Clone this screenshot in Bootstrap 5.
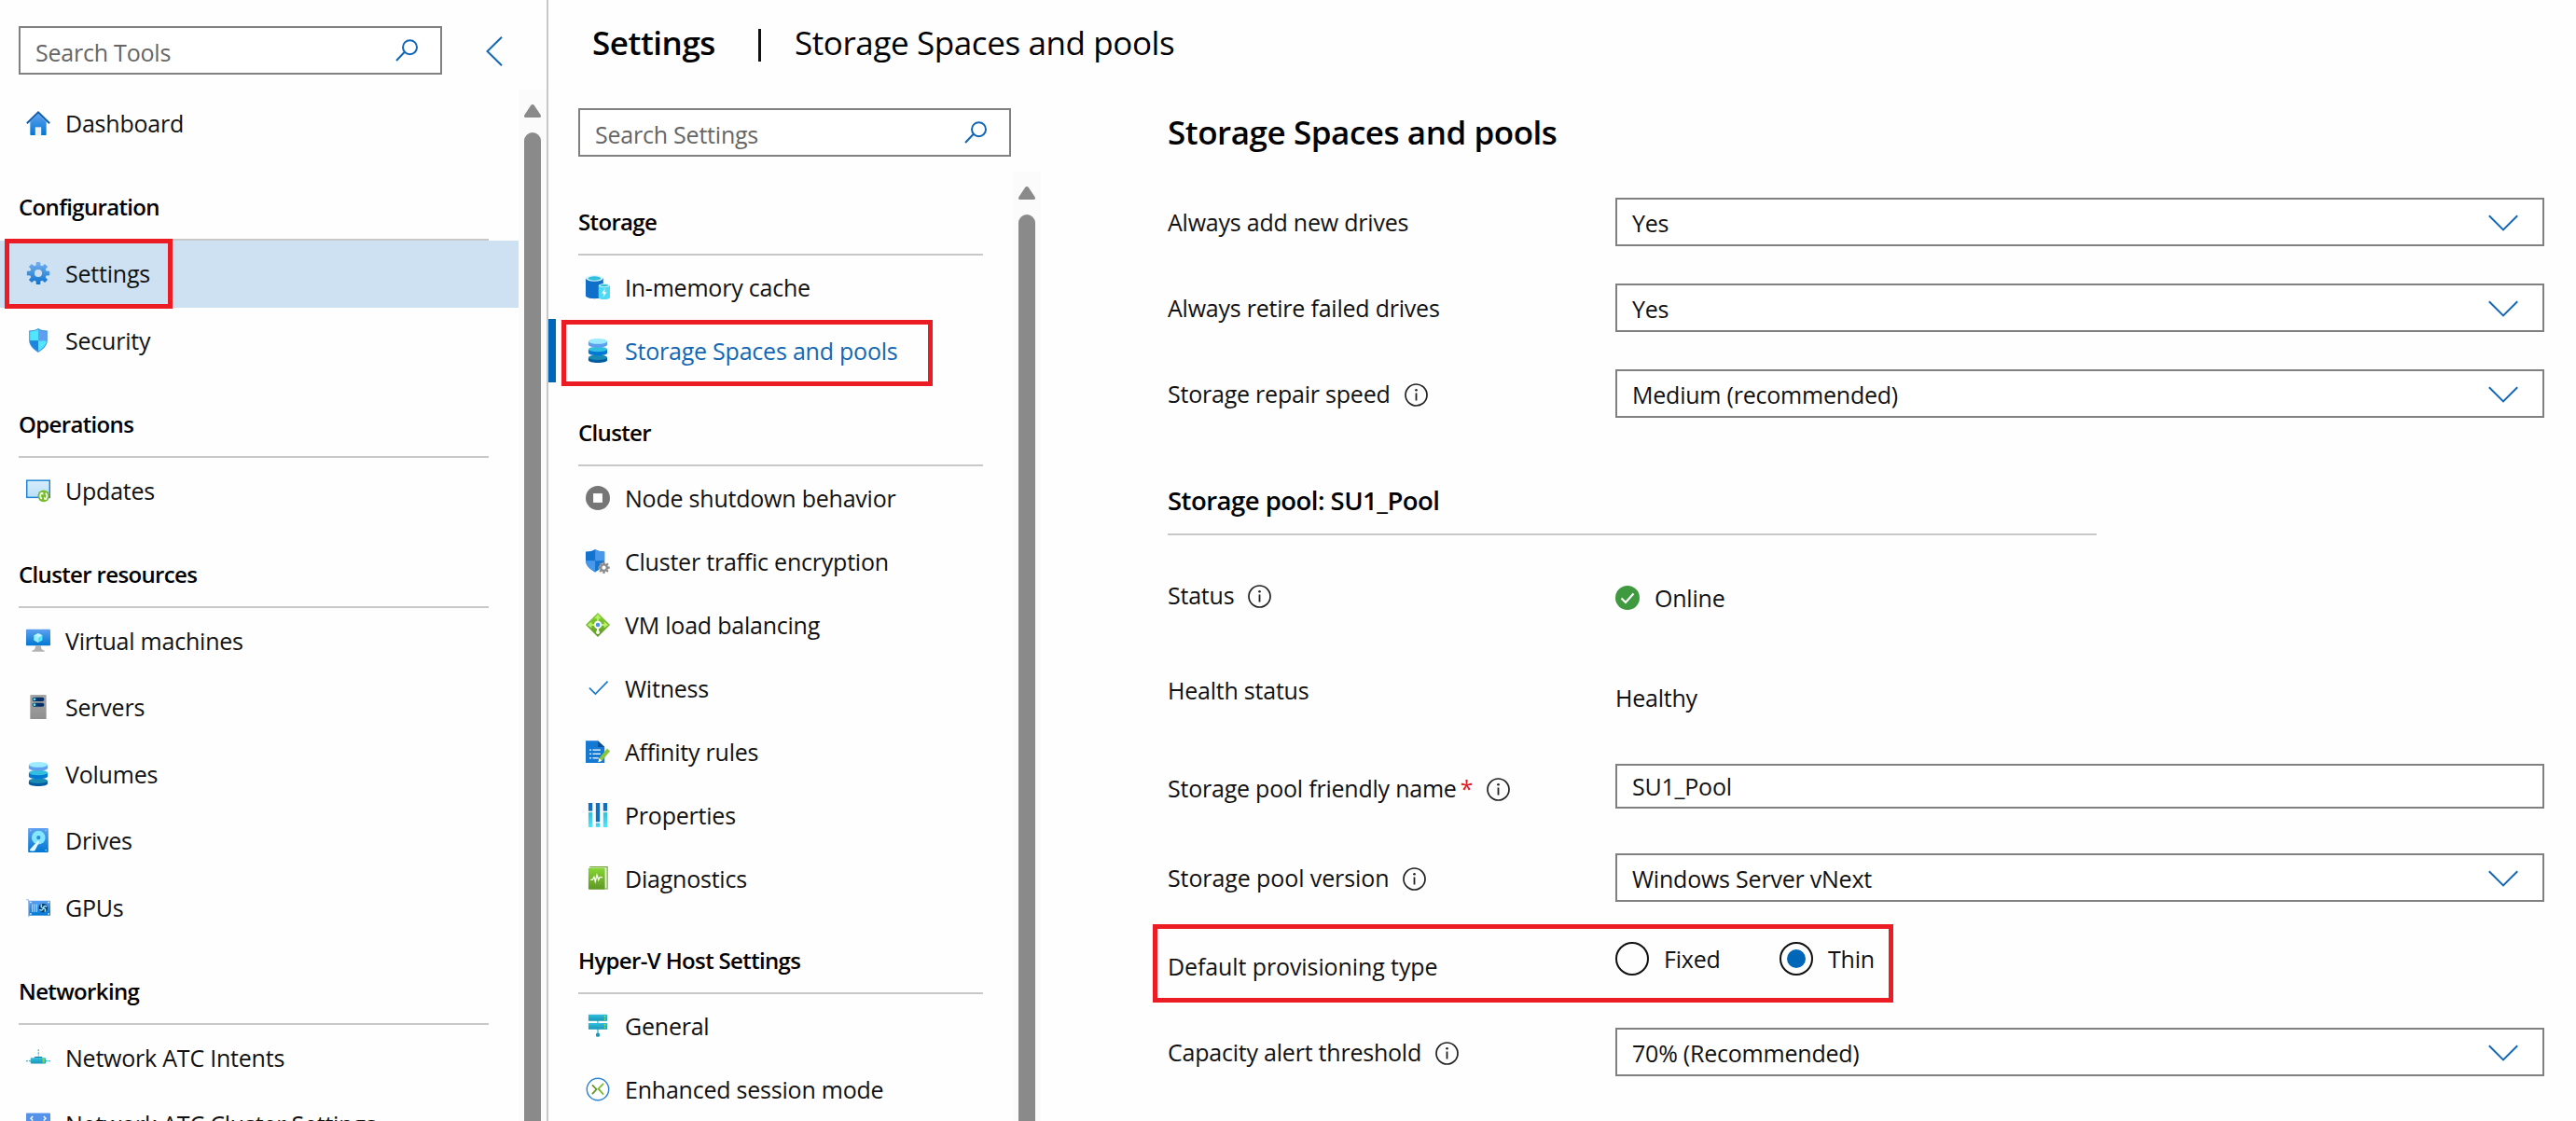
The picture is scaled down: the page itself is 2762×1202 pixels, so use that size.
<!DOCTYPE html>
<html lang="en">
<head>
<meta charset="utf-8">
<title>Settings | Storage Spaces and pools</title>
<link href="https://cdn.jsdelivr.net/npm/bootstrap@5.3.0/dist/css/bootstrap.min.css" rel="stylesheet">
<style>
  body { font-family: "Open Sans", "Noto Sans", sans-serif; font-size: 25px; letter-spacing: -.22px; line-height: 36px; color: #111; background: #fefefe; }
  svg { display: block; flex: none; }
  .ico { width: 26px; height: 26px; }
  .blue-line { fill: none; stroke: #1267b4; stroke-width: 2; }

  /* search boxes and form fields */
  .field { height: 52px; border: 2px solid #808080; border-radius: 0; background: #fff; }
  .field .form-control { font-size: 25px; letter-spacing: -.22px; line-height: 36px; padding: 4px 0 0; color: #111; border: 0; border-radius: 0; background: none; box-shadow: none; }
  .field .form-control::placeholder { color: #666; opacity: 1; }
  .field-short { height: 48px; }
  .field-short .form-control { padding-top: 0; }
  .pick { padding: 2px 26px 0 16px; }

  /* tool navigation */
  .tools { width: 588px; border-right: 2px solid #c8c8c8; }
  .tools-top { height: 96px; padding: 28px 0 0 20px; gap: 47px; }
  .tools-top .field { width: 454px; padding: 0 24px 0 16px; }
  .tools-list { width: 556px; }
  .tool-item { height: 71.5px; padding: 0 0 1px 28px; gap: 16px; color: #111; }
  .tool-item.active { background: #cde1f2; }
  .nav-head { height: 90px; padding-bottom: 16px; margin: 0 32px 0 20px; border-bottom: 2px solid #c8c8c8; font-size: 24px; font-weight: 600; letter-spacing: -.65px; color: #000; }
  .tools-list .nav-head { height: 89.5px; }
  .track { width: 30px; padding-top: 16px; background: #fbfbfb; }
  .thumb { width: 18px; margin-top: 16px; border-radius: 9px 9px 0 0; background: #8a8a8a; }

  /* settings navigation */
  .crumbs { height: 116px; padding: 28px 0 0 47px; font-size: 35px; letter-spacing: -.4px; color: #000; }
  .crumbs strong, .page-title { font-weight: 600; letter-spacing: -.45px; }
  .crumb-bar { width: 3px; height: 35px; margin: 3px 36px 0 46px; background: #111; }
  .settings-col { width: 528px; }
  .settings-top { height: 68px; padding-left: 32px; }
  .settings-top .field { width: 464px; padding: 0 24px 0 16px; }
  .settings-list { width: 498px; }
  .settings-list .nav-head { margin: 0 32px 0 32px; }
  .set-item { height: 68px; padding: 0 0 0 40px; gap: 16px; color: #111; }
  .set-item.active { color: #1267b4; padding-left: 32px; border-left: 8px solid #0067b8; }
  .settings-track { width: 30px; }

  /* highlight frames laid over content */
  .frame { position: absolute; border: 5px solid #ec1c24; pointer-events: none; }
  .frame-tool { left: 5px; top: -2px; width: 180px; height: 75px; }
  .frame-set { left: 6px; top: 1px; width: 398px; height: 71px; }
  .frame-type { left: -16px; top: -19px; width: 794px; height: 84px; }

  /* form */
  .pane { padding: 0 34px 0 136px; }
  .page-title { font-size: 35px; line-height: 48px; margin: 2px 0 46px; color: #000; }
  .f-row { margin-bottom: 40px; }
  .f-label { width: 480px; gap: 15px; }
  .f-label svg { margin-top: 3px; }
  .pool-head { width: 996px; height: 126px; padding-bottom: 19px; margin-bottom: 46px; border-bottom: 2px solid #c8c8c8; font-size: 27.5px; font-weight: 600; letter-spacing: -.52px; color: #000; }
  .star { margin-left: -11px; color: #e01b24; }
  .choice { width: 36px; height: 36px; border: 2px solid #111; border-radius: 50%; }
  .choice-dot { width: 20px; height: 20px; border-radius: 50%; background: #0067b8; }
</style>
<script src="https://cdn.jsdelivr.net/npm/bootstrap@5.3.0/dist/js/bootstrap.bundle.min.js"></script>
</head>
<body class="vh-100 overflow-hidden">

<!-- shared gradients and symbols -->
<svg width="0" height="0" class="position-absolute" aria-hidden="true">
  <defs>
    <linearGradient id="gBlue" x1="0" y1="0" x2="0" y2="1"><stop offset="0" stop-color="#5ea0ef"/><stop offset="1" stop-color="#0078d4"/></linearGradient>
    <linearGradient id="gGear" x1="0" y1="0" x2="0" y2="1"><stop offset="0" stop-color="#76b0f2"/><stop offset="1" stop-color="#0c72cc"/></linearGradient>
    <linearGradient id="gGrey" x1="0" y1="0" x2="0" y2="1"><stop offset="0" stop-color="#a5a5a5"/><stop offset="1" stop-color="#8f8f8f"/></linearGradient>
    <linearGradient id="gGreen" x1="0" y1="0" x2="0" y2="1"><stop offset="0" stop-color="#86d633"/><stop offset="1" stop-color="#5e9624"/></linearGradient>
    <linearGradient id="gCyan" x1="0" y1="0" x2="0" y2="1"><stop offset="0" stop-color="#32bedd"/><stop offset="1" stop-color="#1797b8"/></linearGradient>
    <linearGradient id="gTeal" x1="0" y1="0" x2="0" y2="1"><stop offset="0" stop-color="#32bedd"/><stop offset="1" stop-color="#50e6ff"/></linearGradient>
    <linearGradient id="gPale" x1="0" y1="0" x2="0" y2="1"><stop offset="0" stop-color="#d8ecfa"/><stop offset="1" stop-color="#b9e0f9"/></linearGradient>
    <symbol id="search" viewBox="0 0 24 24"><path class="blue-line" d="M1 23 10 13.500M15.500 1.200a7.500 7.500 0 1 1 0 15 7.500 7.500 0 0 1 0-15Z"/></symbol>
    <symbol id="info" viewBox="0 0 25 25"><circle cx="12.500" cy="12.500" r="11.500" fill="none" stroke="#222" stroke-width="1.700"/><path d="M12.500 10.500v8" stroke="#222" stroke-width="1.800"/><circle cx="12.500" cy="7.200" r="1.300" fill="#222"/></symbol>
    <symbol id="chev" viewBox="0 0 32 18"><path class="blue-line" d="M.8 1.200 16 16.400 31.200 1.200"/></symbol>
    <symbol id="disks" viewBox="0 0 18 18">
      <path d="M2 14.200v1.900C2 17.200 5.100 18 9 18s7-.8 7-1.900v-1.900Z" fill="#005ba1"/><ellipse cx="9" cy="14" rx="7" ry="1.900" fill="#198ab3"/>
      <path d="M2 8.300v2.400c0 1.100 3.100 1.900 7 1.900s7-.8 7-1.900V8.300Z" fill="#0078d4"/><ellipse cx="9" cy="8" rx="7" ry="1.900" fill="#32bedd"/>
      <path d="M2 2.100v2.500c0 1.100 3.100 1.900 7 1.900s7-.8 7-1.900V2.100Z" fill="#5ea0ef"/><ellipse cx="9" cy="2" rx="7" ry="2" fill="#9cebff"/>
    </symbol>
    <symbol id="arrowUp" viewBox="0 0 18 14"><path d="M9 0c.9 0 1.500.4 2 1.200l6.500 9.800c1 1.600.3 3-1.500 3H2C.2 14-.5 12.600.5 11L7 1.200C7.500.4 8.100 0 9 0Z" fill="#8a8a8a"/></symbol>
    <path id="gearPath" fill-rule="evenodd" d="M6.060-1.740 8.670-1.530V1.530L6.060 1.740 5.510 3.050 7.210 5.050 5.050 7.210 3.050 5.510 1.740 6.060 1.530 8.670H-1.530L-1.740 6.060-3.050 5.510-5.050 7.210-7.210 5.050-5.510 3.050-6.060 1.740-8.670 1.530V-1.530L-6.060-1.740-5.510-3.050-7.210-5.050-5.050-7.210-3.050-5.510-1.740-6.060-1.530-8.670H1.530L1.740-6.060 3.050-5.510 5.050-7.210 7.210-5.050 5.510-3.050ZM2.900 0A2.900 2.900 0 1 0-2.900 0 2.900 2.900 0 1 0 2.900 0Z"/>
  </defs>
</svg>

<div class="d-flex h-100">

  <!-- tools -->
  <aside class="tools d-flex flex-column flex-shrink-0">
    <div class="tools-top d-flex align-items-start flex-shrink-0">
      <div class="field d-flex align-items-center">
        <input class="form-control" type="text" placeholder="Search Tools">
        <svg width="24" height="24"><use href="#search"/></svg>
      </div>
      <svg width="18" height="32" viewBox="0 0 18 32" style="margin-top:11px"><path class="blue-line" d="M17 .8 1.500 16 17 31.200"/></svg>
    </div>
    <div class="d-flex flex-grow-1 overflow-hidden">
      <nav class="tools-list flex-shrink-0">
        <div class="tool-item d-flex align-items-center" style="margin-top:1px">
          <svg class="ico" viewBox="0 0 18 18"><path d="M3 8 9 2l6 6v9.500a.5.500 0 0 1-.5.500H3.500a.5.500 0 0 1-.5-.5Z" fill="url(#gBlue)"/><path d="M6.800 12h4.400v6H6.800Z" fill="#f0f0f0"/><path d="M9 0 .1 8.700l1 1L9 2l7.900 7.700 1-1Z" fill="#0f5fae"/></svg>
          <span>Dashboard</span>
        </div>
        <div class="nav-head d-flex align-items-end">Configuration</div>
        <div class="tool-item active d-flex align-items-center position-relative">
          <svg class="ico" viewBox="-9.300 -9.300 18.600 18.600"><use href="#gearPath" fill="url(#gGear)"/></svg>
          <span>Settings</span>
          <div class="frame frame-tool"></div>
        </div>
        <div class="tool-item d-flex align-items-center">
          <svg class="ico" viewBox="0 0 18 18"><path d="M9 0c2 1.400 4.200 1.500 6.800 1.700V9c0 4.200-4.300 7.400-6.800 9C6.500 16.400 2.200 13.200 2.200 9V1.700C4.800 1.500 7 1.400 9 0Z" fill="#3d93e0"/><path d="M9 .9v8.200H2.900V2.400C5 2.200 7.200 2 9 .9ZM9 9.100h6.100c0 3.600-3.700 6.400-6.100 8Z" fill="#50e6ff"/><path d="M9 .9v8.200h6.100V2.400C13 2.200 10.800 2 9 .9Z" fill="#5ea0ef"/><path d="M9 9.100H2.900c0 3.600 3.700 6.400 6.100 8Z" fill="#1b86dc"/></svg>
          <span>Security</span>
        </div>
        <div class="nav-head d-flex align-items-end">Operations</div>
        <div class="tool-item d-flex align-items-center">
          <svg class="ico" viewBox="0 0 18 18"><rect x=".5" y="1.500" width="17" height="12.600" fill="url(#gPale)" stroke="#1c83d6"/><circle cx="13" cy="13" r="4.400" fill="#76bc2d"/><path d="M11.600 10.700c-1.400 1-1.500 3.200 0 4.400M14.400 15.300c1.400-1 1.500-3.200 0-4.400" fill="none" stroke="#fff" stroke-width="1.200"/><path d="M10.500 10.300h2.200v2.200ZM15.500 15.700h-2.200v-2.200Z" fill="#fff"/></svg>
          <span>Updates</span>
        </div>
        <div class="nav-head d-flex align-items-end">Cluster resources</div>
        <div class="tool-item d-flex align-items-center">
          <svg class="ico" viewBox="0 0 18 18"><rect y=".6" width="18" height="12" rx=".6" fill="url(#gBlue)"/><path d="M9 3.400 12.100 5.100v3.500L9 10.400 5.900 8.600V5.100Z" fill="#50e6ff"/><path d="M9 3.400 12.100 5.100 9 6.900 5.900 5.100Z" fill="#c3f1ff"/><path d="M5.900 5.100 9 6.900v3.500L5.900 8.600Z" fill="#9cebff"/><path d="M7 12.600h4c0 2.200.8 3.300 2.600 3.700v.9H4.400v-.9c1.800-.4 2.600-1.500 2.600-3.700Z" fill="#b3b3b3"/></svg>
          <span>Virtual machines</span>
        </div>
        <div class="tool-item d-flex align-items-center">
          <svg class="ico" viewBox="0 0 18 18"><rect x="3" width="12" height="18" rx=".6" fill="url(#gGrey)"/><rect x="4.600" y="1.900" width="8.800" height="2.900" rx="1.400" fill="#003067"/><rect x="4.600" y="6" width="8.800" height="2.900" rx="1.400" fill="#003067"/><circle cx="6.200" cy="3.350" r="1" fill="#50e6ff"/><circle cx="6.200" cy="7.450" r="1" fill="#50e6ff"/></svg>
          <span>Servers</span>
        </div>
        <div class="tool-item d-flex align-items-center">
          <svg class="ico"><use href="#disks"/></svg>
          <span>Volumes</span>
        </div>
        <div class="tool-item d-flex align-items-center">
          <svg class="ico" viewBox="0 0 18 18"><rect x="1.500" width="15" height="18" rx=".7" fill="url(#gBlue)"/><circle cx="9.200" cy="7" r="5.100" fill="#83e8ff"/><circle cx="9.200" cy="7" r="1.500" fill="#2b8ade"/><path d="M8.600 9.500 2.900 15.800c-.4.500 0 1.200.7 1.200h2.200c.4 0 .7-.2.800-.5L9.900 10Z" fill="#e6faff"/><g fill="#9cc6f5"><circle cx="3.300" cy="1.700" r=".6"/><circle cx="14.700" cy="1.700" r=".6"/><circle cx="14.700" cy="16.300" r=".6"/></g></svg>
          <span>Drives</span>
        </div>
        <div class="tool-item d-flex align-items-center">
          <svg class="ico" viewBox="0 0 18 18"><path d="M0 2.900h1.600l.7 1.300V16H1.500V4.500L1 3.500H0Z" fill="#8cb6e6"/><rect x="2.200" y="4" width="15.800" height="11" fill="url(#gBlue)"/><path d="M4.700 6.600v5.800M6.300 6.600v5.800M7.900 6.600v5.800" stroke="#c6e2fb" stroke-width=".7"/><circle cx="12.700" cy="9.500" r="3.300" fill="#07366b"/><path d="M12.700 9.500c-1.800-.3-2-1.700-1-2.700M12.700 9.500c.3-1.800 1.700-2 2.700-1M12.700 9.500c1.800.3 2 1.700 1 2.700M12.700 9.500c-.3 1.800-1.700 2-2.700 1" fill="none" stroke="#9cebff" stroke-width="1"/><g fill="#fff"><rect x="2.900" y="4.700" width="1" height="1"/><rect x="2.900" y="13.300" width="1" height="1"/><rect x="16.300" y="4.700" width="1" height="1"/><rect x="16.300" y="13.300" width="1" height="1"/></g></svg>
          <span>GPUs</span>
        </div>
        <div class="nav-head d-flex align-items-end">Networking</div>
        <div class="tool-item d-flex align-items-center">
          <svg class="ico" viewBox="0 0 18 18"><path d="M9.200 3v5" stroke="#32bedd" stroke-width=".9" stroke-dasharray="1.400 .7"/><path d="M0 11.500h3.500M14.500 11.500H18" stroke="#32bedd" stroke-width=".8" stroke-dasharray="1.500 .6"/><path d="M6.500 8.300h5.200l.7 1H5.800Z" fill="#0e7f9c"/><rect x="3.300" y="9.200" width="11.300" height="4.300" rx=".7" fill="url(#gCyan)"/><rect x="12.200" y="9.700" width="1.600" height="3.200" fill="#86d633"/></svg>
          <span>Network ATC Intents</span>
        </div>
        <div class="tool-item d-flex align-items-center">
          <svg class="ico" viewBox="0 0 18 18"><rect y="1" width="18" height="17" rx=".6" fill="#5592ea"/><path d="M5 3.500 3.500 5 5 6.500M13 3.500 14.500 5 13 6.500" fill="none" stroke="#fff"/></svg>
          <span>Network ATC Cluster Settings</span>
        </div>
      </nav>
      <div class="track d-flex flex-column align-items-center">
        <svg width="18" height="14"><use href="#arrowUp"/></svg>
        <div class="thumb flex-grow-1"></div>
      </div>
    </div>
  </aside>

  <main class="flex-grow-1 d-flex flex-column">
    <header class="crumbs d-flex align-items-start flex-shrink-0">
      <strong>Settings</strong><span class="crumb-bar"></span><span>Storage Spaces and pools</span>
    </header>
    <div class="d-flex flex-grow-1 overflow-hidden">

      <!-- settings navigation -->
      <div class="settings-col d-flex flex-column flex-shrink-0">
        <div class="settings-top flex-shrink-0">
          <div class="field d-flex align-items-center">
            <input class="form-control" type="text" placeholder="Search Settings">
            <svg width="24" height="24"><use href="#search"/></svg>
          </div>
        </div>
        <div class="d-flex flex-grow-1 overflow-hidden">
          <nav class="settings-list flex-shrink-0">
            <div class="nav-head d-flex align-items-end">Storage</div>
            <div class="set-item d-flex align-items-center">
              <svg class="ico" viewBox="0 0 18 18"><path d="M0 2.200v13.200c0 1.100 2.900 2 6.500 2s6.500-.9 6.500-2V2.200Z" fill="#0f6fc9"/><ellipse cx="6.500" cy="2.300" rx="6.500" ry="2.300" fill="#d5f5fc"/><ellipse cx="6.500" cy="2.400" rx="4.800" ry="1.500" fill="#32bedd"/><path d="M9.500 7.700v8.700c0 .9 1.900 1.600 4.200 1.600s4.300-.7 4.300-1.600V7.700Z" fill="#50d9f2"/><ellipse cx="13.750" cy="7.700" rx="4.250" ry="1.400" fill="#c3f1ff"/><ellipse cx="13.750" cy="7.700" rx="2.900" ry=".7" fill="#32bedd"/><path d="M14.300 9.800 11.900 13.500h1.500l-.5 3 2.700-3.900H14Z" fill="#fff"/></svg>
              <span>In-memory cache</span>
            </div>
            <div class="set-item active d-flex align-items-center position-relative">
              <svg class="ico"><use href="#disks"/></svg>
              <span>Storage Spaces and pools</span>
              <div class="frame frame-set"></div>
            </div>
            <div class="nav-head d-flex align-items-end">Cluster</div>
            <div class="set-item d-flex align-items-center">
              <svg class="ico" viewBox="0 0 18 18"><circle cx="9" cy="9" r="9" fill="#767676"/><rect x="5.600" y="5.600" width="6.800" height="6.800" fill="#fff"/></svg>
              <span>Node shutdown behavior</span>
            </div>
            <div class="set-item d-flex align-items-center">
              <svg class="ico" viewBox="0 0 18 18"><path d="M7 0c2.100 1.500 4.400 1.500 7 1.700v7c0 3.900-4.400 6.900-7 8.300-2.600-1.400-7-4.400-7-8.300v-7C2.600 1.500 4.900 1.500 7 0Z" fill="#1374d0"/><path d="M7 0v8.500H14V1.700C11.400 1.500 9.100 1.500 7 0ZM7 8.500H0C.2 12.500 4.500 15.600 7 17Z" fill="#4a98ea"/><g transform="translate(13.500 13.600) scale(.5)"><circle r="7" fill="#fff"/><use href="#gearPath" fill="#8c8c8c"/></g></svg>
              <span>Cluster traffic encryption</span>
            </div>
            <div class="set-item d-flex align-items-center">
              <svg class="ico" viewBox="0 0 18 18"><path d="M9 0 18 9 9 18 0 9Z" fill="url(#gGreen)"/><path d="M9 3v5M2.500 9H15.500" stroke="#b9f06a" stroke-width="1.300"/><path d="M9 1.200 11.400 4.400H6.600ZM1.200 9l3.200-2.400v4.800ZM16.800 9l-3.200-2.400v4.800Z" fill="#b9f06a"/><path d="M9 10v4" stroke="#fff" stroke-width="1.300"/><circle cx="9" cy="14.600" r="1.400" fill="#fff"/><circle cx="9" cy="9" r="2.900" fill="#fff"/><circle cx="9" cy="9" r="1.600" fill="#4a95ea"/></svg>
              <span>VM load balancing</span>
            </div>
            <div class="set-item d-flex align-items-center">
              <svg class="ico" viewBox="0 0 18 18"><path d="M2.700 8.800 7.200 13.200 16.300 3.900" fill="none" stroke="#1a78d0" stroke-width="1.200"/></svg>
              <span>Witness</span>
            </div>
            <div class="set-item d-flex align-items-center">
              <svg class="ico" viewBox="0 0 18 18"><path d="M0 .8h9L14 5.500V17.300H0Z" fill="#1578d3"/><path d="M9 .8 14 5.500H9Z" fill="#0d4f96"/><g stroke="#fff" stroke-width=".9"><path d="M5.200 7.700H11M5.200 10.700H11M5.200 13.700H9.500M2.800 7.700H4.200M2.800 10.700H4.200M2.800 13.700H4.200"/></g><path d="M15.900 6.500 18 8.600 12 15.800 9.300 16.800 10 13.800Z" fill="#86c63b"/><path d="M10 13.800 12 15.800 9.300 16.800Z" fill="#fff"/></svg>
              <span>Affinity rules</span>
            </div>
            <div class="set-item d-flex align-items-center">
              <svg class="ico" viewBox="0 0 18 18"><g fill="#1170c4"><rect x="2" width="3" height="6"/><rect x="7.500" width="3" height="14"/><rect x="13" width="3" height="6"/></g><g fill="url(#gTeal)"><rect x="2" y="7" width="3" height="11"/><rect x="7.500" y="15" width="3" height="3"/><rect x="13" y="7" width="3" height="11"/></g></svg>
              <span>Properties</span>
            </div>
            <div class="set-item d-flex align-items-center">
              <svg class="ico" viewBox="0 0 18 18"><path d="M3 .4H16V16.600H14" fill="none" stroke="#6ba52c" stroke-width=".8"/><rect x="2" y="1.200" width="12.300" height="16" rx=".5" fill="url(#gGreen)"/><path d="M3.600 9.900H5l1.200-2 .9 3.300L8.300 6.400 9.500 10l.9-2H12.500" fill="none" stroke="#fff" stroke-width=".9"/></svg>
              <span>Diagnostics</span>
            </div>
            <div class="nav-head d-flex align-items-end">Hyper-V Host Settings</div>
            <div class="set-item d-flex align-items-center">
              <svg class="ico" viewBox="0 0 18 18"><path d="M9 4v12" stroke="#32bedd" stroke-width=".9"/><rect x="2" y=".6" width="14" height="4.700" rx=".4" fill="url(#gCyan)"/><rect x="2" y="6.900" width="14" height="4.700" rx=".4" fill="url(#gCyan)"/><circle cx="9" cy="15.700" r="1.500" fill="#1797b8"/><g fill="#9be04e"><circle cx="14.300" cy="2" r=".6"/><circle cx="14.300" cy="4" r=".6"/><circle cx="14.300" cy="8.300" r=".6"/><circle cx="14.300" cy="10.200" r=".6"/></g></svg>
              <span>General</span>
            </div>
            <div class="set-item d-flex align-items-center">
              <svg class="ico" viewBox="0 0 18 18"><circle cx="9" cy="9" r="8.100" fill="#fff" stroke="#2c83d8"/><path d="M4.800 5.800 8 9 4.800 12.600" fill="none" stroke="#5e9624" stroke-width="1.200"/><path d="M13.200 4.800 9.400 8.600 13.200 12.900" fill="none" stroke="#76bc2d" stroke-width="1.200"/></svg>
              <span>Enhanced session mode</span>
            </div>
          </nav>
          <div class="track settings-track d-flex flex-column align-items-center">
            <svg width="18" height="14"><use href="#arrowUp"/></svg>
            <div class="thumb flex-grow-1"></div>
          </div>
        </div>
      </div>

      <!-- settings form -->
      <section class="pane flex-grow-1">
        <h1 class="page-title">Storage Spaces and pools</h1>

        <div class="f-row d-flex align-items-center">
          <label class="f-label d-flex align-items-center">Always add new drives</label>
          <div class="field pick flex-grow-1 d-flex align-items-center justify-content-between" role="combobox"><span>Yes</span><svg width="32" height="18"><use href="#chev"/></svg></div>
        </div>
        <div class="f-row d-flex align-items-center">
          <label class="f-label d-flex align-items-center">Always retire failed drives</label>
          <div class="field pick flex-grow-1 d-flex align-items-center justify-content-between" role="combobox"><span>Yes</span><svg width="32" height="18"><use href="#chev"/></svg></div>
        </div>
        <div class="f-row d-flex align-items-center mb-0">
          <label class="f-label d-flex align-items-center">Storage repair speed<svg width="25" height="25"><use href="#info"/></svg></label>
          <div class="field pick flex-grow-1 d-flex align-items-center justify-content-between" role="combobox"><span>Medium (recommended)</span><svg width="32" height="18"><use href="#chev"/></svg></div>
        </div>

        <h2 class="pool-head d-flex align-items-end">Storage pool: SU1_Pool</h2>

        <div class="d-flex align-items-start" style="height:104px">
          <div class="f-label d-flex align-items-center">Status<svg width="25" height="25"><use href="#info"/></svg></div>
          <div class="d-flex align-items-center" style="gap:16px;padding-top:3px">
            <svg class="ico" viewBox="0 0 26 26"><circle cx="13" cy="13" r="13" fill="#3f9a3f"/><path d="M6.500 13.500 11 18 19.500 8.500" fill="none" stroke="#fff" stroke-width="2.200"/></svg>
            <span>Online</span>
          </div>
        </div>
        <div class="d-flex align-items-start" style="height:96px;margin-top:-2px;margin-bottom:1px">
          <div class="f-label">Health status</div>
          <div style="padding-top:8px">Healthy</div>
        </div>
        <div class="d-flex align-items-center" style="height:48px;margin-bottom:48px">
          <label class="f-label d-flex align-items-center pt-1">Storage pool friendly name<span class="star">*</span><svg width="25" height="25"><use href="#info"/></svg></label>
          <div class="field field-short flex-grow-1 d-flex align-items-center" style="padding-left:16px"><input class="form-control" type="text" value="SU1_Pool"></div>
        </div>
        <div class="d-flex align-items-center" style="margin-bottom:43px">
          <label class="f-label d-flex align-items-center" style="letter-spacing:-.1px">Storage pool version<svg width="25" height="25"><use href="#info"/></svg></label>
          <div class="field pick flex-grow-1 d-flex align-items-center justify-content-between" role="combobox"><span>Windows Server vNext</span><svg width="32" height="18"><use href="#chev"/></svg></div>
        </div>
        <div class="d-flex align-items-start position-relative" style="height:92px">
          <div class="f-label" style="padding-top:8px;letter-spacing:-.1px">Default provisioning type</div>
          <div class="d-flex align-items-center" style="gap:16px;width:176px"><span class="choice"></span><span>Fixed</span></div>
          <div class="d-flex align-items-center" style="gap:16px"><span class="choice d-flex align-items-center justify-content-center"><span class="choice-dot"></span></span><span>Thin</span></div>
          <div class="frame frame-type"></div>
        </div>
        <div class="d-flex align-items-center">
          <label class="f-label d-flex align-items-center">Capacity alert threshold<svg width="25" height="25"><use href="#info"/></svg></label>
          <div class="field pick flex-grow-1 d-flex align-items-center justify-content-between" role="combobox"><span>70% (Recommended)</span><svg width="32" height="18"><use href="#chev"/></svg></div>
        </div>
      </section>
    </div>
  </main>
</div>
</body>
</html>
